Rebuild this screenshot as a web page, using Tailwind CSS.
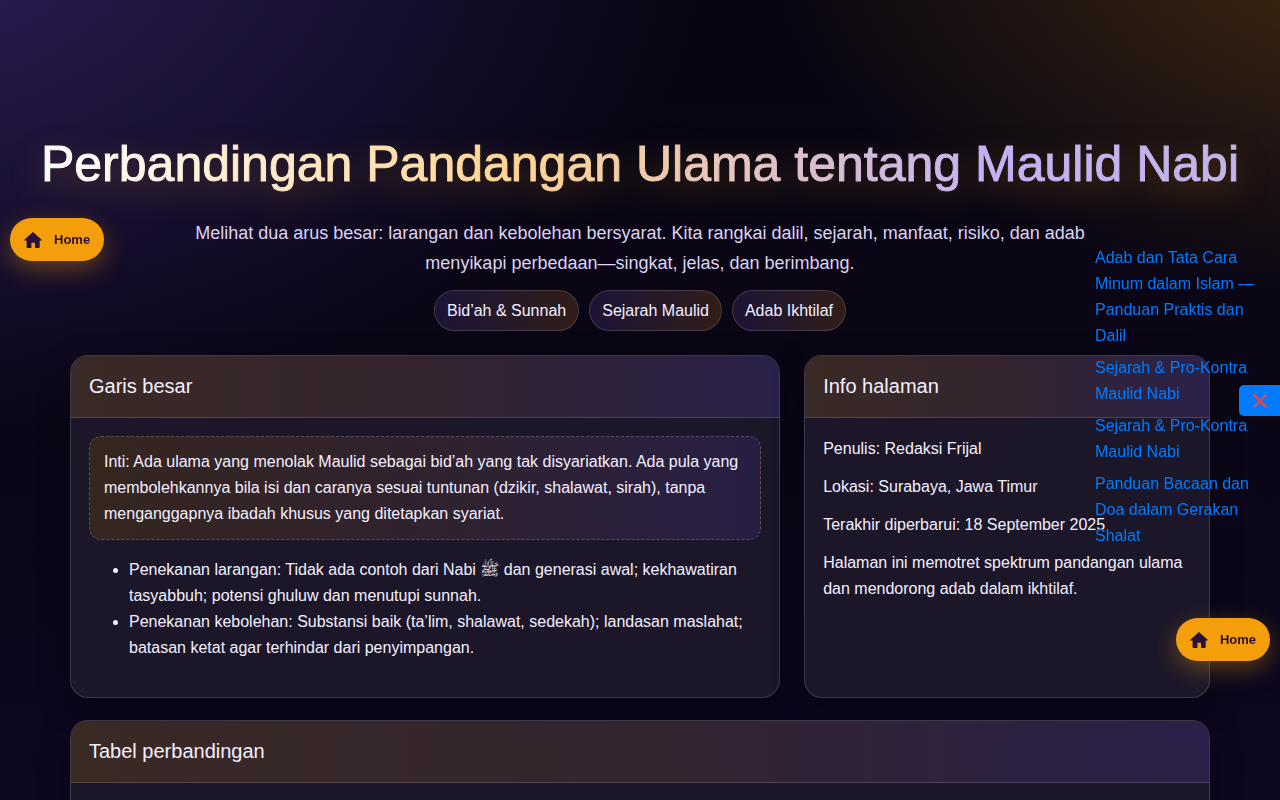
<!DOCTYPE html>
<html lang="id">
<head>
<meta charset="utf-8">
<meta name="viewport" content="width=device-width, initial-scale=1">
<title>Perbandingan Pandangan Ulama tentang Maulid Nabi</title>
<script src="https://cdn.jsdelivr.net/npm/@tailwindcss/browser@4"></script>
</head>
<body class="min-h-screen overflow-x-hidden bg-[#0a0616] bg-[radial-gradient(1000px_600px_at_110%_-10%,rgba(245,158,11,0.27),transparent_65%),radial-gradient(1300px_800px_at_-10%_-10%,rgba(91,61,175,0.48),transparent_65%),linear-gradient(180deg,#080512_0px,#0a0616_400px,#0c0820_800px)] bg-no-repeat font-['Liberation_Sans','DejaVu_Sans',sans-serif] text-base leading-[26px] text-[#f5f0ff]">

<header class="px-4 pt-[132px] text-center">
  <h1 class="mx-auto w-fit bg-[linear-gradient(90deg,#ffffff,#ffd591_40%,#c4b1f5_80%,#c4b5e8)] bg-clip-text text-[50px] leading-[64px] font-medium text-transparent drop-shadow-[0_10px_16px_rgba(245,158,11,0.25)] [-webkit-text-stroke:1px_transparent] lg:whitespace-nowrap">Perbandingan Pandangan Ulama tentang Maulid Nabi</h1>
  <p class="mx-auto mt-[22px] max-w-[900px] text-lg leading-[30px] text-[#ddd3f3]">Melihat dua arus besar: larangan dan kebolehan bersyarat. Kita rangkai dalil, sejarah, manfaat, risiko, dan adab menyikapi perbedaan—singkat, jelas, dan berimbang.</p>
  <ul class="mt-3 flex flex-wrap justify-center gap-2.5">
    <li class="rounded-full border border-white/15 bg-linear-to-r from-[#1d1336] to-[#2f1d17] px-3 py-[7px] leading-[25px]">Bid’ah &amp; Sunnah</li>
    <li class="rounded-full border border-white/15 bg-linear-to-r from-[#1d1336] to-[#2f1d17] px-3 py-[7px] leading-[25px]">Sejarah Maulid</li>
    <li class="rounded-full border border-white/15 bg-linear-to-r from-[#1d1336] to-[#2f1d17] px-3 py-[7px] leading-[25px]">Adab Ikhtilaf</li>
  </ul>
</header>

<main class="mx-auto mt-6 grid max-w-[1180px] gap-x-6 gap-y-[22px] px-5 md:grid-cols-[1.4fr_.8fr]">
  <section class="overflow-hidden rounded-[18px] border border-white/15 bg-[#1b1729] shadow-[0_10px_30px_rgba(0,0,0,0.35)]">
    <h2 class="border-b border-white/15 bg-linear-to-r from-[#3a2a24] via-[#33242f] to-[#2b2049] px-[18px] py-4 text-xl leading-[29px]">Garis besar</h2>
    <div class="p-[18px]">
      <p class="rounded-xl border border-dashed border-white/20 bg-linear-to-r from-[#35261f] via-[#30222e] to-[#281e44] px-3.5 py-3">Inti: Ada ulama yang menolak Maulid sebagai bid’ah yang tak disyariatkan. Ada pula yang membolehkannya bila isi dan caranya sesuai tuntunan (dzikir, shalawat, sirah), tanpa menganggapnya ibadah khusus yang ditetapkan syariat.</p>
      <ul class="mt-[17px] mb-[18px] list-disc pl-10">
        <li>Penekanan larangan: Tidak ada contoh dari Nabi ﷺ dan generasi awal; kekhawatiran tasyabbuh; potensi ghuluw dan menutupi sunnah.</li>
        <li>Penekanan kebolehan: Substansi baik (ta’lim, shalawat, sedekah); landasan maslahat; batasan ketat agar terhindar dari penyimpangan.</li>
      </ul>
    </div>
  </section>

  <aside class="overflow-hidden rounded-[18px] border border-white/15 bg-[#1b1729] shadow-[0_10px_30px_rgba(0,0,0,0.35)]">
    <h2 class="border-b border-white/15 bg-linear-to-r from-[#3a2a24] via-[#33242f] to-[#2b2049] px-[18px] py-4 text-xl leading-[29px]">Info halaman</h2>
    <div class="flex flex-col gap-3 p-[18px]">
      <p>Penulis: Redaksi Frijal</p>
      <p>Lokasi: Surabaya, Jawa Timur</p>
      <p>Terakhir diperbarui: 18 September 2025</p>
      <p>Halaman ini memotret spektrum pandangan ulama dan mendorong adab dalam ikhtilaf.</p>
    </div>
  </aside>

  <section class="overflow-hidden rounded-t-[18px] border border-b-0 border-white/15 bg-[#1b1729] shadow-[0_10px_30px_rgba(0,0,0,0.35)] md:col-span-2">
    <h2 class="border-b border-white/15 bg-linear-to-r from-[#3a2a24] via-[#33242f] to-[#2b2049] px-[18px] py-4 text-xl leading-[29px]">Tabel perbandingan</h2>
    <div class="p-[18px]"></div>
  </section>
</main>

<nav aria-label="Artikel terkait" class="fixed top-[245px] right-5 flex w-[165px] flex-col gap-1.5 text-[#007bff]">
  <a href="#adab-minum">Adab dan Tata Cara Minum dalam Islam — Panduan Praktis dan Dalil</a>
  <a href="#sejarah-maulid">Sejarah &amp; Pro-Kontra Maulid Nabi</a>
  <a href="#pro-kontra">Sejarah &amp; Pro-Kontra Maulid Nabi</a>
  <a href="#bacaan-shalat">Panduan Bacaan dan Doa dalam Gerakan Shalat</a>
</nav>
<button type="button" aria-label="Tutup" class="fixed top-[385px] right-0 flex h-[31px] w-[41px] items-center justify-center rounded-l-[5px] bg-[#007bff]">
  <svg class="size-4" viewBox="0 0 16 16" fill="none" stroke="#e5484d" stroke-width="2.4" aria-hidden="true"><path d="M1.500 1.500 14.500 14.500M14.500 1.500 1.500 14.500"/></svg>
</button>

<a href="#home" class="fixed top-[218px] left-2.5 flex h-[43px] items-center gap-3 rounded-full bg-[#f59e0b] px-3.5 text-[13px] font-bold text-[#2a0f3a] shadow-[0_8px_24px_rgba(245,158,11,0.35)]">
  <svg class="size-[18px]" viewBox="0 0 18 18" fill="currentColor" aria-hidden="true"><path d="M9 .9 17.600 8.700q.5.8-.5.900H15.700v6.400q0 .9-.9.900H11v-5.200H7.400v5.200H3.500q-.9 0-.9-.9V9.600H.9q-1-.1-.5-.9Z"/></svg>
  <span>Home</span>
</a>
<a href="#home" class="fixed top-[618px] right-2.5 flex h-[43px] items-center gap-3 rounded-full bg-[#f59e0b] px-3.5 text-[13px] font-bold text-[#2a0f3a] shadow-[0_8px_24px_rgba(245,158,11,0.35)]">
  <svg class="size-[18px]" viewBox="0 0 18 18" fill="currentColor" aria-hidden="true"><path d="M9 .9 17.600 8.700q.5.8-.5.900H15.700v6.400q0 .9-.9.900H11v-5.200H7.400v5.200H3.500q-.9 0-.9-.9V9.600H.9q-1-.1-.5-.9Z"/></svg>
  <span>Home</span>
</a>
</body>
</html>
